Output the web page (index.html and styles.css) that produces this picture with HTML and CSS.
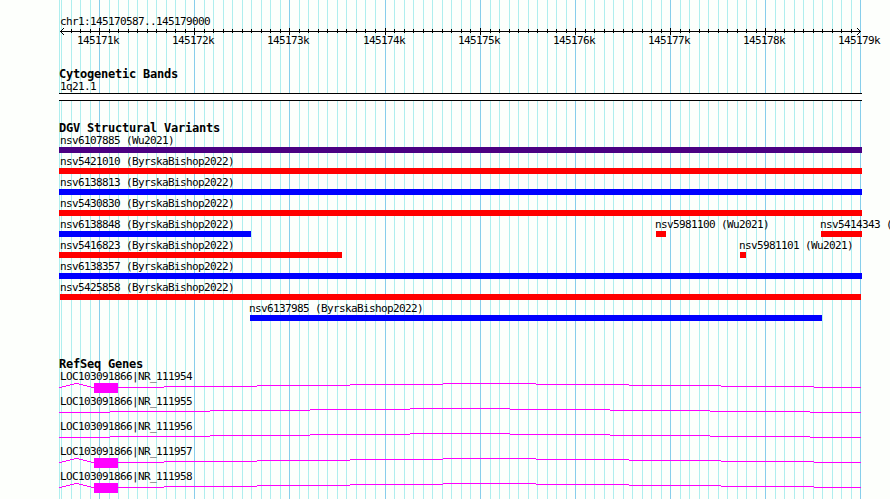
FILE: index.html
```
<!DOCTYPE html>
<html lang="en">
<head>
<meta charset="utf-8">
<title>chr1:145170587..145179000</title>
<link rel="stylesheet" href="styles.css">
</head>
<body>
<main class="browser">
<svg class="grid" width="890" height="499" aria-hidden="true"><path id="minor" class="grid-minor"/><path id="major" class="grid-major"/></svg>
<section class="ruler">
<div class="label">chr1:145170587..145179000</div>
<svg class="axis" width="804" height="9" aria-hidden="true"><path d="M1 4.5H802M2 3.5h1M3 2.5h1M4 1.5h1M2 5.5h1M3 6.5h1M4 7.5h1M800 3.5h1M799 2.5h1M798 1.5h1M800 5.5h1M799 6.5h1M798 7.5h1"/><path id="ticks"/></svg>
<div class="scale"><span>145171k</span><span>145172k</span><span>145173k</span><span>145174k</span><span>145175k</span><span>145176k</span><span>145177k</span><span>145178k</span><span>145179k</span></div>
</section>
<section class="cyto">
<h2>Cytogenetic Bands</h2>
<div class="label">1q21.1</div>
<div class="band"></div>
</section>
<section class="variants">
<h2>DGV Structural Variants</h2>
<div class="row"><div class="feature purple full">nsv6107885 (Wu2021)</div></div>
<div class="row"><div class="feature red full">nsv5421010 (ByrskaBishop2022)</div></div>
<div class="row"><div class="feature blue full">nsv6138813 (ByrskaBishop2022)</div></div>
<div class="row"><div class="feature red full">nsv5430830 (ByrskaBishop2022)</div></div>
<div class="row"><div class="feature blue v6138848">nsv6138848 (ByrskaBishop2022)</div><div class="feature red v5981100">nsv5981100 (Wu2021)</div><div class="feature red v5414343">nsv5414343 (ByrskaBishop2022)</div></div>
<div class="row"><div class="feature red v5416823">nsv5416823 (ByrskaBishop2022)</div><div class="feature red v5981101">nsv5981101 (Wu2021)</div></div>
<div class="row"><div class="feature blue full">nsv6138357 (ByrskaBishop2022)</div></div>
<div class="row"><div class="feature red v5425858">nsv5425858 (ByrskaBishop2022)</div></div>
<div class="row"><div class="feature blue v6137985">nsv6137985 (ByrskaBishop2022)</div></div>
</section>
<section class="genes">
<h2>RefSeq Genes</h2>
<div class="gene"><div class="label">LOC103091866|NR_111954</div><svg width="804" height="13"><use href="#spliced"/></svg></div>
<div class="gene"><div class="label">LOC103091866|NR_111955</div><svg width="804" height="13"><use href="#plain"/></svg></div>
<div class="gene"><div class="label">LOC103091866|NR_111956</div><svg width="804" height="13"><use href="#plain"/></svg></div>
<div class="gene"><div class="label">LOC103091866|NR_111957</div><svg width="804" height="13"><use href="#spliced"/></svg></div>
<div class="gene"><div class="label">LOC103091866|NR_111958</div><svg width="804" height="13"><use href="#spliced"/></svg></div>
</section>
<svg class="defs" width="0" height="0"><defs>
<g id="spliced"><path class="intron" d="M0 4.5H3M3 3.5H7M7 2.5H11M11 1.5H15M15 .5H20M20 1.5H24M24 2.5H28M28 3.5H32M32 4.5H35M59 4.5H105M105 3.5H198M198 2.5H291M291 1.5H384M384 .5H477M477 1.5H570M570 2.5H662M662 3.5H755M755 4.5H802"/><path class="exon" d="M35 0H59V10H35Z"/></g>
<g id="plain"><path class="intron" d="M0 4.5H51M51 3.5H151M151 2.5H251M251 1.5H351M351 .5H451M451 1.5H551M551 2.5H651M651 3.5H751M751 4.5H802"/></g>
</defs></svg>
</main>
<script src="grid.js"></script>
</body>
</html>
```
FILE: styles.css
```
* { box-sizing: border-box; }
body { margin: 0; background: #fdfffc; color: #000; }
.browser {
  position: relative;
  width: 890px;
  height: 499px;
  padding: 15px 0 0 59px;
  overflow: hidden;
  font: 11px/14px "DejaVu Sans Mono", monospace;
  letter-spacing: -0.622px;
  white-space: nowrap;
}
svg { display: block; fill: none; shape-rendering: crispEdges; }
section { position: relative; }
.grid { position: absolute; left: 0; top: 0; }
.grid-minor { stroke: #afeeee; }
.grid-major { stroke: #87ceeb; }
.defs { position: absolute; }
.label { height: 12px; padding-left: 1px; }
.ruler { height: 53px; }
.axis { stroke: #000; }
.scale { display: flex; margin-top: -1px; padding-left: 18px; line-height: 12px; }
.scale span { width: 95px; flex: none; }
.scale span:nth-child(3) { width: 96px; }
h2 { margin: 0; height: 12px; font: bold 12px/12px "DejaVu Sans Mono", monospace; letter-spacing: -0.225px; }
.cyto { height: 54px; }
.band { width: 803px; height: 8px; margin-top: 1px; border: solid #000; border-width: 1px 0; background: #fff; }
.variants { height: 237px; padding-top: 1px; }
.variants h2 { height: 11px; line-height: 10px; }
.row { display: flex; height: 21px; }
.feature { flex: none; height: 19px; padding-left: 1px; border-bottom: 6px solid; }
.full { width: 803px; }
.purple { border-color: #4b0082; }
.red { border-color: #f00; }
.blue { border-color: #00f; }
.v6138848 { width: 192px; }
.v5981100 { width: 10px; margin-left: 405px; padding: 0; text-indent: -1px; }
.v5414343 { width: 41px; margin-left: 155px; padding: 0; text-indent: -1px; }
.v5416823 { width: 283px; }
.v5981101 { width: 6px; margin-left: 398px; padding: 0; text-indent: -1px; }
.v5425858 { width: 801px; margin-left: 1px; padding: 0; }
.v6137985 { width: 572px; margin-left: 191px; padding: 0; text-indent: -1px; }
.genes h2 { line-height: 10px; }
.gene { height: 25px; }
.gene .label { line-height: 12px; }
.intron { stroke: #f0f; }
.exon { fill: #f0f; }
```
FILE: grid.js
```
// Pixel columns of the 100 bp and 1 kb guide lines.
const major = [99, 194, 289, 385, 480, 575, 670, 765, 860];
const minor = [59, 61, 71, 80, 90];
for (let i = 0; i < major.length - 1; i++) {
  const offsets = [10, 19, 29, 38, 48, 57, 67, 76, 86];
  if (major[i] === 385) offsets.splice(0, 9, 9, 19, 28, 38, 47, 57, 66, 76, 85);
  for (const offset of offsets) minor.push(major[i] + offset);
}
const lines = (xs, top, bottom, shift) =>
  xs.map(x => `M${x + 0.5 - shift} ${top}V${bottom}`).join("");
document.getElementById("minor").setAttribute("d", lines(minor, 0, 499, 0));
document.getElementById("major").setAttribute("d", lines(major, 0, 499, 0));
document.getElementById("ticks").setAttribute("d",
  lines(minor.slice(2), 2, 6, 59) + lines(major.slice(0, -1), 1, 8, 59));
```
